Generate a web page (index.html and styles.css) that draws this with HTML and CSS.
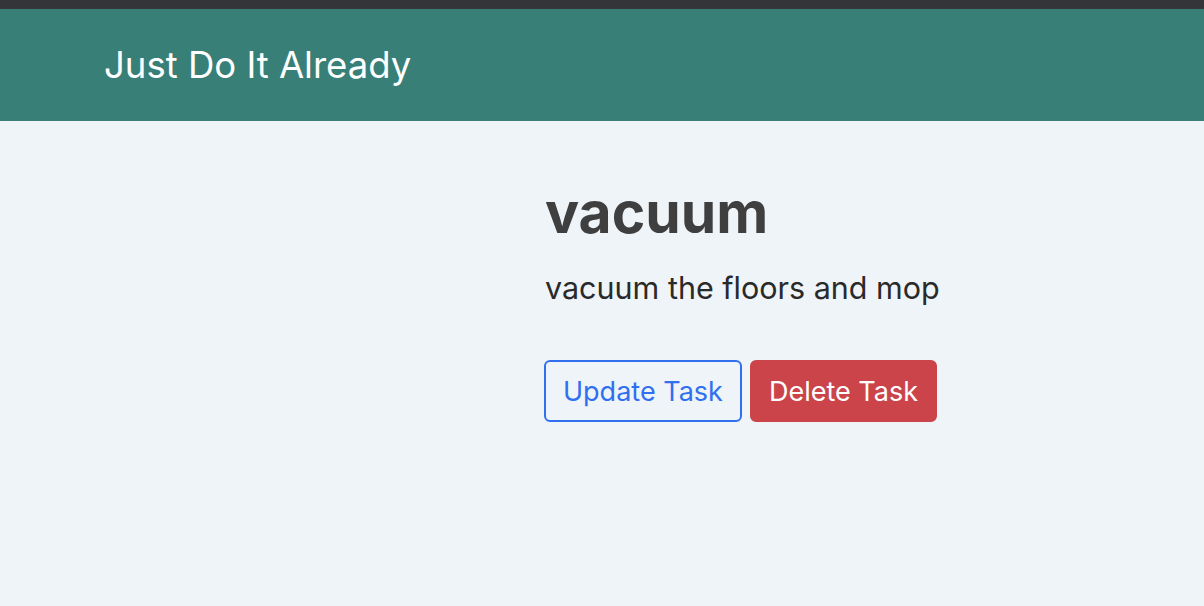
FILE: index.html
```html
<!DOCTYPE html>
<html>
<head>
<meta charset="utf-8">
<link rel="stylesheet" href="styles.css">
</head>
<body>
<div class="topbar"></div>
<nav class="navbar"><span class="brand">Just Do It Already</span></nav>
<main class="content">
  <section class="task">
    <h1 class="title">vacuum</h1>
    <p class="desc">vacuum the floors and mop</p>
    <div class="actions">
      <button class="btn btn-outline">Update Task</button>
      <button class="btn btn-danger">Delete Task</button>
    </div>
  </section>
</main>
</body>
</html>
```
FILE: styles.css
```css
html, body {
  margin: 0;
  padding: 0;
  height: 100%;
}
body {
  background: #eff4f8;
  font-family: Inter, "Liberation Sans", Arial, sans-serif;
  color: #333;
}
.topbar {
  height: 9px;
  background: #333539;
}
.navbar {
  height: 112px;
  background: #387f77;
  display: flex;
  align-items: center;
  padding-left: 104px;
}
.brand {
  color: #fff;
  font-size: 36.5px;
}
.content {
  padding-left: 545px;
  padding-top: 57px;
}
.title {
  margin: 0;
  font-size: 57px;
  font-weight: bold;
  color: #3f3f3f;
  line-height: 70px;
}
.desc {
  margin: 20px 0 0;
  font-size: 30.5px;
  line-height: 40px;
  color: #2a2a2a;
}
.actions {
  margin-top: 52px;
  margin-left: -1px;
  display: flex;
  gap: 8px;
}
.btn {
  font-family: inherit;
  font-size: 27px;
  height: 62px;
  padding: 0 17px;
  border-radius: 6px;
  cursor: pointer;
}
.btn-outline {
  background: transparent;
  border: 2px solid #3070f0;
  color: #3070f0;
}
.btn-danger {
  background: #cb444a;
  border: 2px solid #cb444a;
  color: #fff;
}
```
